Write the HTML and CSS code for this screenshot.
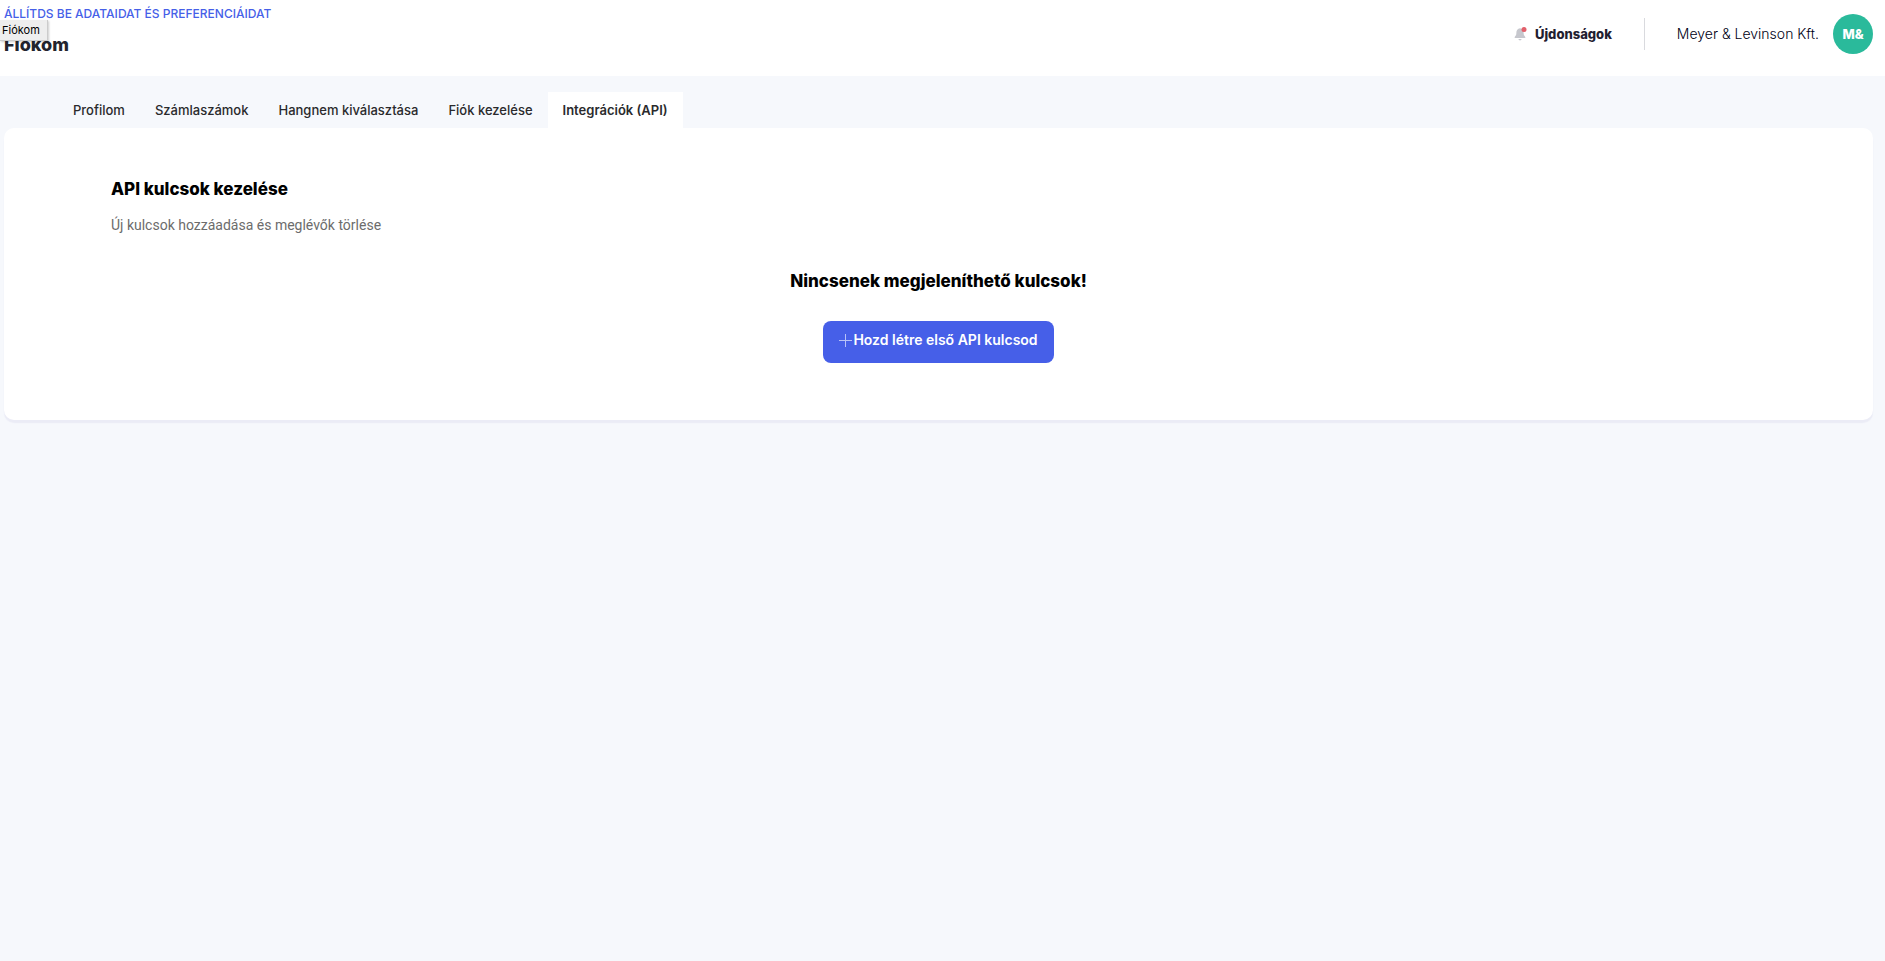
FILE: index.html
```html
<!DOCTYPE html>
<html lang="hu">
<head>
<meta charset="utf-8">
<title>Fiókom</title>
<link rel="stylesheet" href="styles.css">
</head>
<body>
<header class="topbar">
  <div class="titles">
    <p class="pretitle">ÁLLÍTDS BE ADATAIDAT ÉS PREFERENCIÁIDAT</p>
    <h1 class="title">Fiókom</h1>
    <span class="tooltip" role="tooltip">Fiókom</span>
  </div>
  <div class="account">
    <a class="news" href="#">
      <svg class="bell" viewBox="0 0 14 14" aria-hidden="true">
        <path fill="#c6c7cd" d="M6 1.200C3.600 1.600 2.400 3.400 2.400 5.600C2.400 8.200 1.700 9 .7 9.900V11H11.300V9.900C10.300 9 9.600 8.200 9.600 5.600C9.600 3.400 8.400 1.600 6 1.200Z"/>
        <path fill="#c6c7cd" d="M4.300 12H7.700Q7.300 13.400 6 13.400T4.300 12Z"/>
        <circle cx="10" cy="2.500" r="2.500" fill="#e2606b"/>
      </svg>
      Újdonságok</a>
    <a class="company" href="#">Meyer &amp; Levinson Kft.</a>
    <a class="avatar" href="#">M&amp;</a>
  </div>
</header>
<main>
  <nav class="tabs">
    <a class="tab" href="#">Profilom</a>
    <a class="tab" href="#">Számlaszámok</a>
    <a class="tab" href="#">Hangnem kiválasztása</a>
    <a class="tab" href="#">Fiók kezelése</a>
    <a class="tab active" href="#" aria-current="page">Integrációk (API)</a>
  </nav>
  <section class="card">
    <h2 class="heading">API kulcsok kezelése</h2>
    <p class="hint">Új kulcsok hozzáadása és meglévők törlése</p>
    <div class="empty">
      <h3 class="heading">Nincsenek megjeleníthető kulcsok!</h3>
      <button class="create" type="button">
        <svg class="plus" viewBox="0 0 14 14" aria-hidden="true"><path d="M6.500 1V14M0 7.500H13"/></svg>
        Hozd létre első API kulcsod</button>
    </div>
  </section>
</main>
</body>
</html>
```
FILE: styles.css
```css
* { box-sizing: border-box; }
body {
  margin: 0;
  min-height: 100vh;
  background: #f6f8fc;
  color: #212529;
  font: 13px/20px Inter, "Liberation Sans", sans-serif;
}
h1, h2, h3, p { margin: 0; }
a { color: inherit; text-decoration: none; }
.topbar {
  display: flex;
  justify-content: space-between;
  min-height: 76px;
  background: #fff;
}
.titles { position: relative; padding: 4px; }
.pretitle { color: #465fe8; font-size: 12px; font-weight: 500; }
.title { padding-top: 9px; color: #22242d; font-size: 18px; line-height: 24px; font-weight: 800; }
.tooltip {
  position: absolute;
  top: 20px;
  left: 0;
  padding: 0 7px 0 2px;
  background: #eee;
  border: solid #ccc;
  border-width: 0 1px 1px 0;
  box-shadow: 1px 1px 2px #0003;
  color: #000;
  font-size: 11px;
}
.account {
  display: flex;
  align-items: center;
  padding: 0 12px 8px 0;
  color: #1f2030;
}
.news {
  display: flex;
  align-items: center;
  gap: 7px;
  padding-right: 32px;
  border-right: 1px solid #d9dade;
  line-height: 32px;
  font-weight: 800;
}
.bell { width: 14px; height: 14px; }
.company { padding: 0 14px 0 32px; font-size: 14px; font-weight: 300; color: #000014; }
.avatar {
  width: 40px;
  border-radius: 50%;
  background: #2aba9b;
  color: #fff;
  line-height: 40px;
  text-align: center;
  font-weight: 800;
}
.tabs { display: flex; padding: 16px 58px 0; }
.tab { padding: 8px 15px; color: #2a2a2c; font-weight: 500; }
.active { background: #fff; font-weight: 600; }
.card {
  margin: 0 12px 0 4px;
  padding: 49px 107px 57px;
  border-radius: 10px;
  background: #fff;
  box-shadow: 0 3px 1px #ebecf6;
}
.heading { color: #000; font-size: 17px; line-height: 24px; font-weight: 800; }
.hint { padding-top: 14px; color: #6c6c6c; font-family: Roboto, sans-serif; font-size: 14px; }
.empty { display: flex; flex-direction: column; align-items: center; padding-top: 34px; }
.create {
  display: flex;
  align-items: center;
  margin-top: 28px;
  padding: 9px 16px 13px;
  border: 0;
  border-radius: 8px;
  background: #465fe8;
  color: #fff;
  font: inherit;
  font-size: 14px;
  font-weight: 600;
}
.plus { width: 14px; height: 14px; fill: none; stroke: #b8c2f7; }
```
